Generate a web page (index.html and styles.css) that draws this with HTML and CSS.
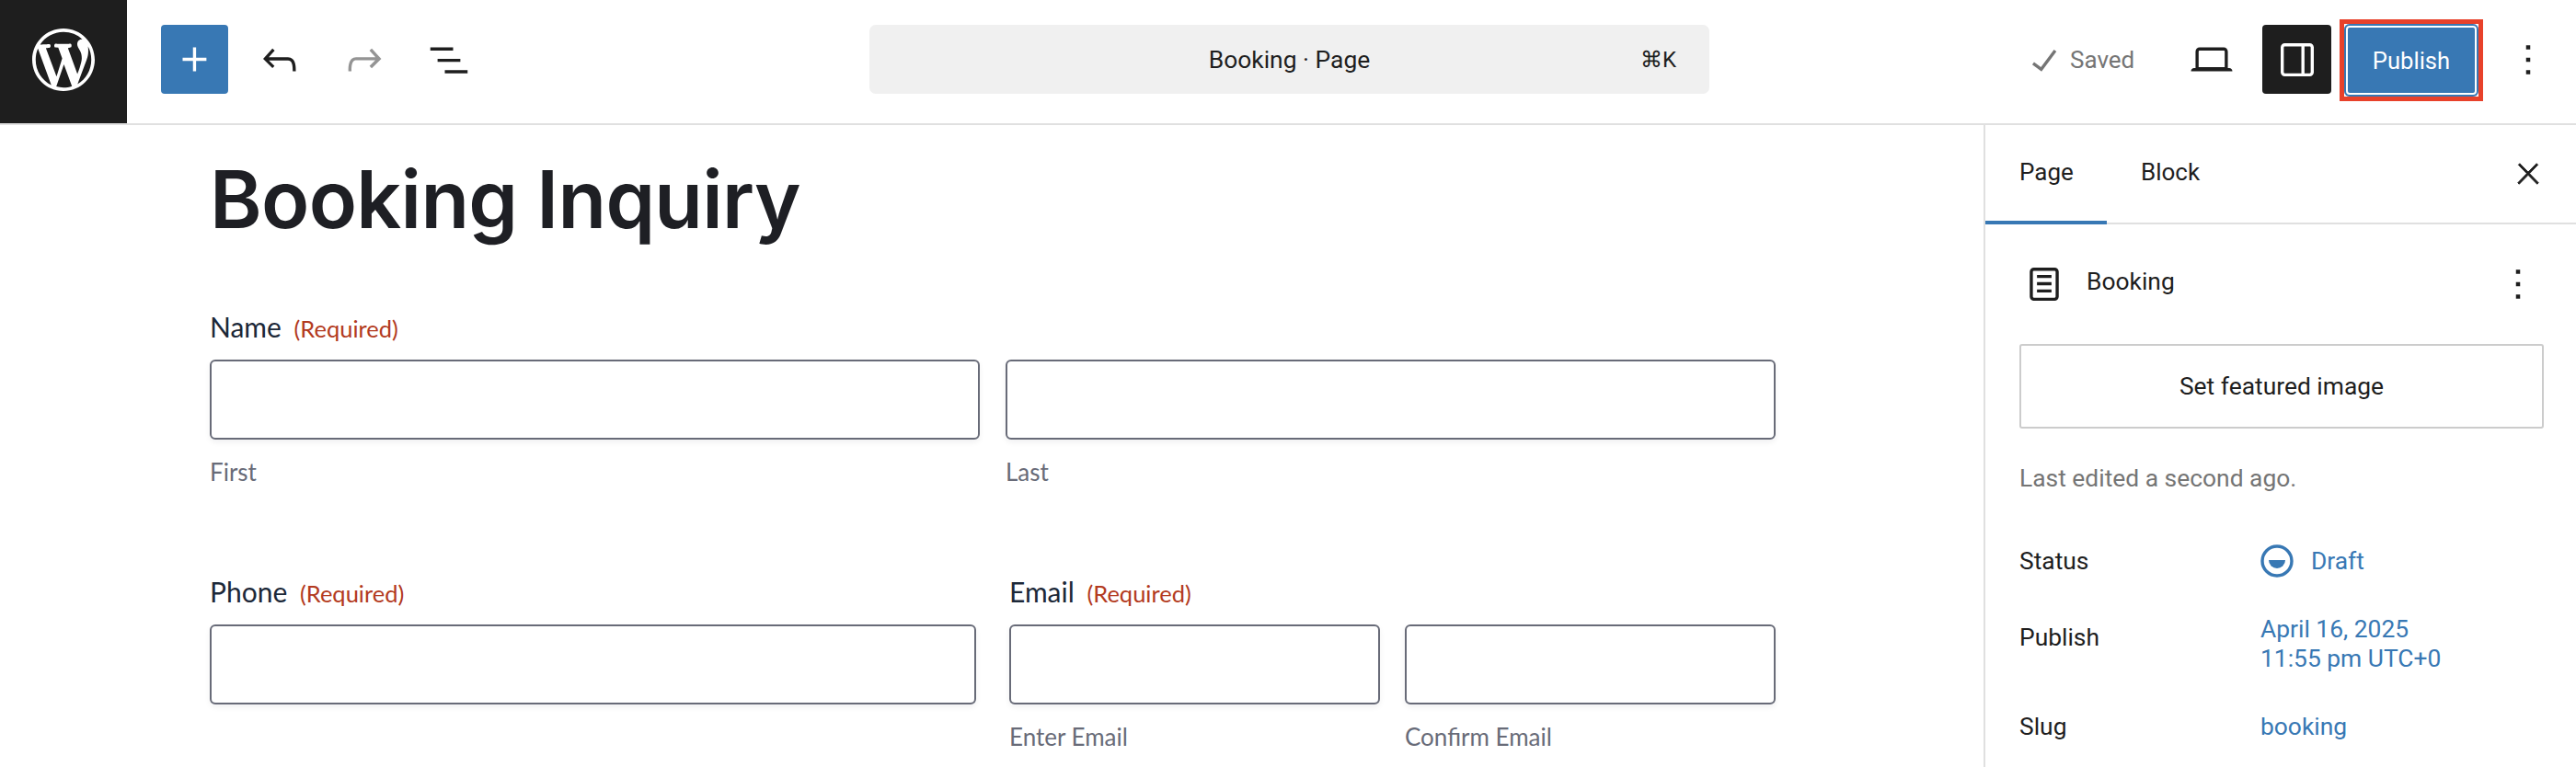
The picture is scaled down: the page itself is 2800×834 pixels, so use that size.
FILE: index.html
```html
<!DOCTYPE html>
<html lang="en">
<head>
<meta charset="utf-8">
<title>Booking Inquiry</title>
<link rel="stylesheet" href="styles.css">
</head>
<body>
<div class="editor">
  <header class="topbar">
    <div class="tools">
      <div class="logo"><svg class="wp" viewBox="0 0 20 20"><path fill="#fff" d="M20 10c0-5.51-4.49-10-10-10C4.48 0 0 4.49 0 10c0 5.52 4.48 10 10 10 5.51 0 10-4.48 10-10zM7.78 15.37L4.37 6.22c.55-.02 1.17-.08 1.17-.08.5-.06.44-1.13-.06-1.11 0 0-1.45.11-2.37.11-.18 0-.37 0-.58-.01C4.12 2.69 6.87 1.11 10 1.11c2.33 0 4.45.87 6.05 2.34-.68-.11-1.65.39-1.65 1.58 0 .74.45 1.36.9 2.1.35.61.55 1.36.55 2.46 0 1.49-1.4 5-1.4 5l-3.03-8.37c.54-.02.82-.17.82-.17.5-.05.44-1.25-.06-1.22 0 0-1.44.12-2.38.12-.87 0-2.33-.12-2.33-.12-.5-.03-.56 1.2-.06 1.22l.92.08 1.26 3.41zM17.41 10c.24-.64.74-1.87.43-4.25.7 1.29 1.05 2.71 1.05 4.25 0 3.29-1.73 6.24-4.4 7.78.97-2.59 1.94-5.2 2.92-7.78zM6.1 18.09C3.12 16.65 1.11 13.53 1.11 10c0-1.3.23-2.48.72-3.59C3.25 10.3 4.67 14.2 6.1 18.09zm4.03-6.63l2.58 6.98c-.86.29-1.76.45-2.71.45-.79 0-1.57-.11-2.29-.33.81-2.38 1.62-4.74 2.42-7.1z"/></svg></div>
      <button class="inserter"><svg class="icon" viewBox="0 0 24 24"><path fill="#fff" d="M11 12.5V17.5H12.5V12.5H17.5V11H12.5V6H11V11H6V12.5H11Z"/></svg></button>
      <button class="tool"><svg class="icon" viewBox="0 0 24 24"><path d="M18.3 11.7c-.6-.6-1.4-.9-2.3-.9H6.7l2.9-3.3-1.1-1-4.5 5L8.5 16l1-1-2.7-2.7H16c.5 0 .9.2 1.3.5 1 1 1 3.4 1 4.5v.3h1.5v-.2c0-1.5 0-4.3-1.5-5.7z"/></svg></button>
      <button class="tool muted"><svg class="icon" viewBox="0 0 24 24"><path d="M15.6 6.5l-1.1 1 2.9 3.3H8c-.9 0-1.7.3-2.3.9-1.4 1.5-1.4 4.2-1.4 5.6v.2h1.5v-.3c0-1.1 0-3.5 1-4.5.3-.3.7-.5 1.3-.5h9.2L14.5 15l1.1 1.1 4.6-4.6-4.6-5z"/></svg></button>
      <button class="tool"><svg class="icon" viewBox="0 0 24 24"><path d="M3 6h11v1.5H3V6zm3.5 5.5h11V13h-11v-1.5zM21 17H10v1.5h11V17z"/></svg></button>
    </div>
    <div class="command">
      <span class="command-title">Booking <span class="dot">·</span> Page</span>
      <span class="shortcut">⌘K</span>
    </div>
    <div class="actions">
      <span class="saved"><svg class="icon check" viewBox="0 0 24 24"><path d="M16.7 7.1l-6.3 8.5-3.3-2.5-.9 1.2 4.5 3.4L17.9 8z"/></svg>Saved</span>
      <button class="tool device"><svg class="icon" viewBox="0 0 24 24"><path d="M20.5 16h-.7V8c0-1.1-.9-2-2-2H6.2c-1.1 0-2 .9-2 2v8h-.7c-.8 0-1.5.7-1.5 1.5h20c0-.8-.7-1.5-1.5-1.5zM5.7 8c0-.3.2-.5.5-.5h11.6c.3 0 .5.2.5.5v7.6H5.7V8z"/></svg></button>
      <button class="toggle"><svg class="icon" viewBox="0 0 24 24"><path fill="#fff" d="M18 4H6c-1.1 0-2 .9-2 2v12c0 1.1.9 2 2 2h12c1.1 0 2-.9 2-2V6c0-1.1-.9-2-2-2zm-4 14.5H6c-.3 0-.5-.2-.5-.5V6c0-.3.2-.5.5-.5h8v13zm4.5-.5c0 .3-.2.5-.5.5h-2.5v-13H18c.3 0 .5.2.5.5v12z"/></svg></button>
      <div class="highlight"><button class="publish">Publish</button></div>
      <button class="kebab"><svg class="icon" viewBox="0 0 24 24"><path d="M13 19h-2v-2h2v2zm0-6h-2v-2h2v2zm0-6h-2V5h2v2z"/></svg></button>
    </div>
  </header>
  <div class="workspace">
    <main class="canvas">
      <h1 class="title">Booking Inquiry</h1>
      <section class="field">
        <div class="label">Name <span class="req">(Required)</span></div>
        <div class="pair wide">
          <div class="sub"><input class="input" type="text"><div class="hint">First</div></div>
          <div class="sub"><input class="input" type="text"><div class="hint">Last</div></div>
        </div>
      </section>
      <div class="columns">
        <section class="field column">
          <div class="label">Phone <span class="req">(Required)</span></div>
          <input class="input" type="text">
        </section>
        <section class="field column">
          <div class="label">Email <span class="req">(Required)</span></div>
          <div class="pair">
            <div class="sub"><input class="input" type="text"><div class="hint">Enter Email</div></div>
            <div class="sub"><input class="input" type="text"><div class="hint">Confirm Email</div></div>
          </div>
        </section>
      </div>
    </main>
    <aside class="sidebar">
      <div class="tabs">
        <div class="tab active">Page</div>
        <div class="tab">Block</div>
        <svg class="icon close" viewBox="0 0 24 24"><path d="M13 11.8l6.1-6.3-1-1-6.1 6.2-6.1-6.2-1 1 6.1 6.3-6.5 6.7 1 1 6.5-6.6 6.5 6.6 1-1z"/></svg>
      </div>
      <div class="panel">
        <div class="doc">
          <svg class="icon docicon" viewBox="0 0 24 24"><path d="M15.5 7.5h-7V9h7V7.5Zm-7 3.5h7v1.5h-7V11Zm7 3.5h-7V16h7v-1.5Z"/><path d="M17 4H7a2 2 0 0 0-2 2v12a2 2 0 0 0 2 2h10a2 2 0 0 0 2-2V6a2 2 0 0 0-2-2ZM7 5.5h10a.5.5 0 0 1 .5.5v12a.5.5 0 0 1-.5.5H7a.5.5 0 0 1-.5-.5V6a.5.5 0 0 1 .5-.5Z"/></svg>
          <span class="doc-name">Booking</span>
          <svg class="icon doc-more" viewBox="0 0 24 24"><path d="M13 19h-2v-2h2v2zm0-6h-2v-2h2v2zm0-6h-2V5h2v2z"/></svg>
        </div>
        <button class="featured">Set featured image</button>
        <p class="edited">Last edited a second ago.</p>
        <div class="row status"><span class="key">Status</span><span class="val draft"><svg class="drafticon" viewBox="0 0 36 36"><circle cx="18" cy="18" r="16" fill="none" stroke="#3878b4" stroke-width="3.4"/><path fill="#3878b4" d="M9 17h18a9 9 0 0 1-18 0z"/></svg>Draft</span></div>
        <div class="row publishrow"><span class="key">Publish</span><span class="val">April 16, 2025<br>11:55 pm UTC+0</span></div>
        <div class="row slug"><span class="key">Slug</span><span class="val">booking</span></div>
      </div>
    </aside>
  </div>
</div>
</body>
</html>
```
FILE: styles.css
```css
* { box-sizing: border-box; }
html, body { margin: 0; padding: 0; background: #fff; }
body { font-family: "Roboto", "Liberation Sans", sans-serif; color: #1e1e1e; }
button { border: 0; background: none; padding: 0; margin: 0; font: inherit; color: inherit; display: flex; align-items: center; justify-content: center; }
.editor { width: 2800px; height: 834px; overflow: hidden; display: flex; flex-direction: column; }
.topbar { height: 136px; flex: none; display: flex; border-bottom: 2px solid #e0e0e0; }
.tools { width: 945px; flex: none; display: flex; align-items: flex-start; }
.logo { width: 138px; height: 134px; padding-bottom: 4px; background: #1e1e1e; display: flex; align-items: center; justify-content: center; flex: none; }
.wp { width: 68px; height: 68px; }
.icon { width: 54px; height: 54px; fill: #1e1e1e; flex: none; }
.inserter { width: 73px; height: 75px; margin: 27px 10px 0 37px; background: #3878b4; border-radius: 4px; }
.tool { width: 92px; height: 75px; margin-top: 27px; }
.muted .icon { fill: #949494; }
.command { width: 913px; height: 75px; margin-top: 27px; background: #f0f0f0; border-radius: 7px; display: flex; align-items: center; justify-content: center; position: relative; font-size: 26.4px; }
.shortcut { position: absolute; right: 36px; top: 50%; transform: translateY(-50%); font-size: 24px; }
.actions { flex: 1; min-width: 0; display: flex; align-items: flex-start; padding-top: 27px; }
.saved { width: 542px; height: 75px; padding-left: 337px; flex: none; display: flex; align-items: center; color: #757575; font-size: 26px; gap: 1px; }
.check { fill: #757575; }
.device { width: 92px; margin-top: 0; margin-left: -42px; }
.toggle { width: 75px; height: 75px; margin-left: 9px; background: #1e1e1e; border-radius: 4px; flex: none; }
.highlight { margin: -6px 0 0 9px; padding: 0; width: 156px; height: 89px; border: 5px solid #e8412a; flex: none; }
.publish { width: 100%; height: 100%; background: #3878b4; color: #fff; border-radius: 6px; font-size: 25.6px; box-shadow: inset 0 0 0 2px #3878b4, inset 0 0 0 4px #fff; }
.kebab { width: 80px; height: 75px; margin-left: 9px; }
.workspace { flex: 1; min-height: 0; display: flex; }
.canvas { flex: 1; min-width: 0; padding: 31px 0 0 228px; }
.title { margin: 0 0 70px; width: 1702px; font-family: "Inter", sans-serif; font-weight: 600; font-size: 86px; letter-spacing: -.7px; line-height: 100px; color: #1e1f24; }
.field { font-family: "Lato", sans-serif; }
.label { font-size: 30px; line-height: 36px; color: #1c2838; margin-bottom: 16px; }
.req { font-size: 25.5px; color: #b33a20; margin-left: 6px; }
.pair { display: flex; gap: 27px; }
.pair.wide { width: 1702px; gap: 28px; }
.sub { flex: 1; min-width: 0; }
.input { display: block; width: 100%; height: 87px; margin: 0; padding: 0; background: #fff; border: 2px solid #686b78; border-radius: 6px; box-shadow: 0 3px 6px rgba(20, 25, 40, .06); }
.hint { font-size: 26px; line-height: 32px; color: #686b78; margin-top: 19px; }
.columns { display: flex; gap: 36px; width: 1702px; margin-top: 96px; }
.column { flex: 1; min-width: 0; }
.sidebar { width: 644px; flex: none; border-left: 2px solid #e0e0e0; font-size: 26.4px; }
.tabs { height: 108px; border-bottom: 2px solid #e0e0e0; display: flex; position: relative; }
.tab { height: 108px; padding: 36px 37px 0; line-height: 30px; font-size: 26px; }
.tab.active { width: 132px; border-bottom: 4px solid #3878b4; }
.tab + .tab { padding-left: 37px; }
.close { position: absolute; right: 34px; top: 35px; width: 36px; height: 36px; stroke: #1e1e1e; stroke-width: .6; }
.panel { padding: 0 37px; }
.doc { height: 130px; display: flex; align-items: center; position: relative; }
.docicon { width: 54px; height: 54px; margin-right: 19px; }
.doc-name { padding-bottom: 6px; }
.doc-more { position: absolute; right: -1px; top: 38px; width: 54px; }
.featured { width: 570px; height: 92px; border: 2px solid #cccccc; border-radius: 3px; background: #fff; }
.edited { margin: 38px 0 0; line-height: 32px; color: #757575; }
.row { display: flex; line-height: 32px; }
.key { width: 262px; flex: none; }
.val { color: #3878b4; }
.status { margin-top: 56px; align-items: center; }
.draft { display: flex; align-items: center; gap: 19px; }
.drafticon { width: 36px; height: 36px; }
.publishrow { margin-top: 40px; }
.publishrow .key { margin-top: 9px; }
.slug { margin-top: 42px; }
```
